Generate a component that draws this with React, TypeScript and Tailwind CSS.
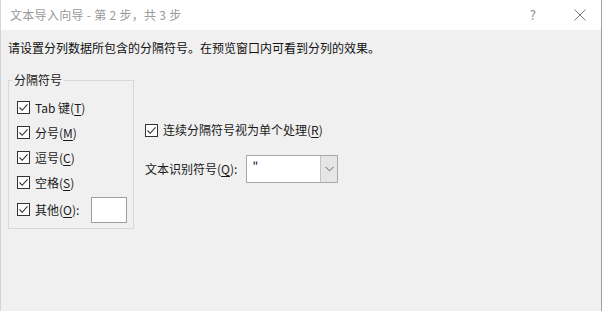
import React from "react";

const font = { fontFamily: '"Microsoft YaHei UI", "Noto Sans CJK SC", "Noto Sans", sans-serif' };

function Check() {
  return (
    <span className="w-[13px] h-[13px] shrink-0 border border-[#333333] bg-white flex items-center justify-center">
      <svg width="11" height="11" viewBox="0 0 11 11" fill="none">
        <path d="M1.5 5.5 L4.2 8.3 L9.5 2.3" stroke="#333333" strokeWidth="1.1" />
      </svg>
    </span>
  );
}

function Label({ text, k, tail = ")" }: { text: string; k: string; tail?: string }) {
  return (
    <span className="text-[12px] leading-[16px] text-[#1a1a1a] whitespace-nowrap">
      {text}(<span className="underline underline-offset-2">{k}</span>
      {tail}
    </span>
  );
}

function Row({ children, h = "h-[25px]" }: { children: React.ReactNode; h?: string }) {
  return <div className={`flex items-center gap-[5px] ${h}`}>{children}</div>;
}

export default function App() {
  return (
    <div className="w-[603px] h-[311px] bg-white pr-[1px]" style={font}>
      <div className="h-full flex flex-col border-l border-[#d4d4d4] border-r border-r-[#a0a0a0]">
        {/* title bar */}
        <div className="h-[30px] flex items-center pl-[9px] bg-white">
          <span className="text-[12px] text-[#9a9a9a] tracking-[0.3px]">文本导入向导 - 第 2 步，共 3 步</span>
          <span className="ml-auto text-[13px] text-[#8a8a8a] mr-[38px]">?</span>
          <svg width="12" height="12" viewBox="0 0 12 12" className="mr-[15px]">
            <path d="M0.5 0.5 L11.5 11.5 M11.5 0.5 L0.5 11.5" stroke="#7a7a7a" strokeWidth="1" />
          </svg>
        </div>

        {/* body */}
        <div className="flex-1 bg-[#f0f0f0] pl-[7px] pt-[10px]">
          <div className="text-[12px] leading-[16px] text-[#111111]">
            请设置分列数据所包含的分隔符号。在预览窗口内可看到分列的效果。
          </div>

          <div className="flex items-start mt-[16px]">
            <fieldset className="w-[126px] border border-[#d9d9d9] pl-[8px] pr-[6px] pt-[7px] pb-[4px] m-0">
              <legend className="ml-[-5px] px-[2px] text-[12px] leading-[16px] text-[#1a1a1a]">分隔符号</legend>
              <Row>
                <Check />
                <Label text="Tab 键" k="T" />
              </Row>
              <Row>
                <Check />
                <Label text="分号" k="M" />
              </Row>
              <Row>
                <Check />
                <Label text="逗号" k="C" />
              </Row>
              <Row>
                <Check />
                <Label text="空格" k="S" />
              </Row>
              <Row h="h-[29px]">
                <Check />
                <Label text="其他" k="O" tail="):" />
                <div className="ml-auto w-[36px] h-[26px] bg-white border border-[#a0a0a0]" />
              </Row>
            </fieldset>

            <div className="flex flex-col ml-[11px] mt-[50px]">
              <div className="flex items-center gap-[5px] h-[16px]">
                <Check />
                <Label text="连续分隔符号视为单个处理" k="R" />
              </div>
              <div className="flex items-center mt-[17px]">
                <Label text="文本识别符号" k="Q" tail="):" />
                <div className="ml-[9px] w-[92px] h-[28px] bg-white border border-[#a8a8a8] flex">
                  <div className="flex-1 pl-[5px] pt-[2px] text-[12px] leading-[16px] text-[#111111]">"</div>
                  <div className="w-[17px] bg-[#e6e6e6] border-l border-[#c4c4c4] flex items-center justify-center">
                    <svg width="9" height="6" viewBox="0 0 9 6" fill="none">
                      <path d="M0.5 0.8 L4.5 4.8 L8.5 0.8" stroke="#606060" strokeWidth="1" />
                    </svg>
                  </div>
                </div>
              </div>
            </div>
          </div>
        </div>
      </div>
    </div>
  );
}
